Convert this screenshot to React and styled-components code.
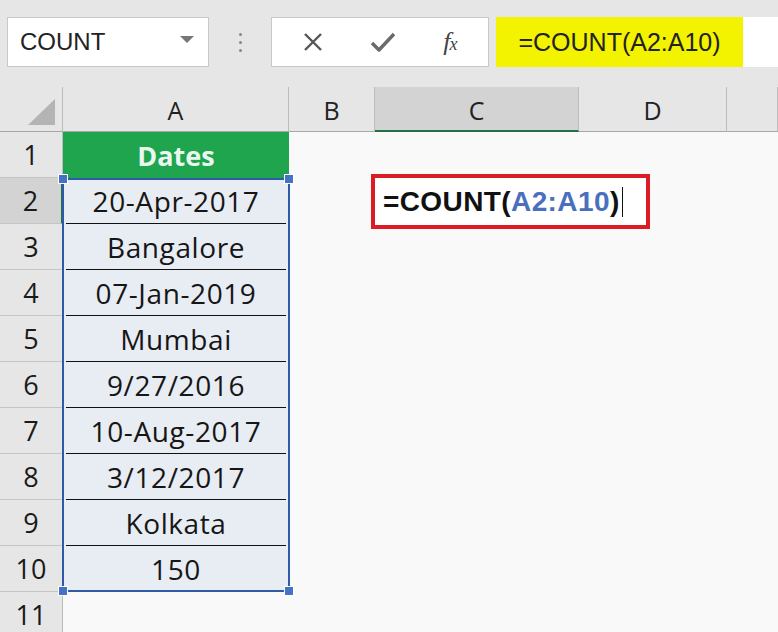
import styled, { createGlobalStyle } from "styled-components";

const GlobalStyle = createGlobalStyle`
    html, body {
        margin: 0;
        padding: 0;
        background: #f9f9f9;
        overflow: hidden;
    }
`;

const Page = styled.div`
    width: 778px;
    height: 632px;
    overflow: hidden;
    font-family: "Open Sans", "Liberation Sans", sans-serif;
    color: #1a1a1a;
`;

const TopBar = styled.div`
    height: 87px;
    background: #e6e6e6;
    display: flex;
    align-items: center;
    padding: 0 0 3px 7px;
    box-sizing: border-box;
`;

const NameBox = styled.div`
    width: 202px;
    height: 50px;
    box-sizing: border-box;
    background: #fff;
    border: 1px solid #c8c8c8;
    display: flex;
    align-items: center;
    justify-content: space-between;
    padding: 0 14px 0 12px;
    font-family: "Liberation Sans", Arial, sans-serif;
    font-size: 24px;
    color: #222;
`;

const Caret = styled.span`
    width: 0;
    height: 0;
    border-left: 7px solid transparent;
    border-right: 7px solid transparent;
    border-top: 7px solid #777;
    margin-top: -6px;
`;

const Dots = styled.div`
    width: 62px;
    display: flex;
    flex-direction: column;
    align-items: center;
    gap: 5px;
    span {
        width: 3px;
        height: 3px;
        border-radius: 50%;
        background: #888;
    }
`;

const FxButtons = styled.div`
    width: 218px;
    height: 50px;
    box-sizing: border-box;
    background: #fff;
    border: 1px solid #c8c8c8;
    display: flex;
    align-items: center;
    justify-content: space-around;
    padding: 0 8px;
    margin-right: 7px;
`;

const Fx = styled.span`
    font-family: "Liberation Serif", "Times New Roman", serif;
    font-style: italic;
    font-size: 26px;
    color: #444;
    letter-spacing: -1px;
    small {
        font-size: 18px;
    }
`;

const FormulaInput = styled.div`
    flex: 1;
    height: 50px;
    background: #fff;
    display: flex;
`;

const Highlight = styled.div`
    width: 247px;
    background: #f3f300;
    display: flex;
    align-items: center;
    justify-content: center;
    font-family: "Liberation Sans", Arial, sans-serif;
    font-size: 25px;
    color: #222;
`;

const Grid = styled.div`
    position: relative;
    display: grid;
    grid-template-columns: 63px 226px 86px 204px 148px 51px;
    grid-template-rows: 45px repeat(11, 46px);
`;

const Corner = styled.div`
    background: #e6e6e6;
    border-right: 1px solid #bcbcbc;
    border-bottom: 1px solid #a8a8a8;
    display: flex;
    align-items: flex-end;
    justify-content: flex-end;
    padding: 0 7px 6px 0;
    &::before {
        content: "";
        width: 0;
        height: 0;
        border-left: 27px solid transparent;
        border-bottom: 26px solid #b4b4b4;
    }
`;

const ColHead = styled.div`
    background: ${(p) => (p.$active ? "#d3d3d3" : "#e6e6e6")};
    border-right: 1px solid #bcbcbc;
    border-bottom: ${(p) => (p.$active ? "2px solid #217346" : "1px solid #a8a8a8")};
    display: flex;
    align-items: center;
    justify-content: center;
    font-size: 25px;
    color: #222;
    padding-top: 2px;
`;

const RowHead = styled.div`
    background: ${(p) => (p.$active ? "#d3d3d3" : "#e6e6e6")};
    border-right: ${(p) => (p.$active ? "2px solid #217346" : "1px solid #bcbcbc")};
    border-bottom: 1px solid #c4c4c4;
    display: flex;
    align-items: center;
    justify-content: center;
    font-size: 27px;
    color: #1a1a1a;
`;

const HeaderCell = styled.div`
    background: #1ea54e;
    color: #eaf7ee;
    font-weight: 700;
    font-size: 27px;
    display: flex;
    align-items: center;
    justify-content: center;
`;

const DataCell = styled.div`
    position: relative;
    background: #e8ecf3;
    display: flex;
    align-items: center;
    justify-content: center;
    font-size: 28px;
    letter-spacing: 0.6px;
    color: #161616;
    white-space: nowrap;
    &::after {
        content: "";
        display: ${(p) => (p.$last ? "none" : "block")};
        position: absolute;
        left: 3px;
        right: 3px;
        bottom: -1px;
        height: 2px;
        background: #111;
    }
`;

const Empty = styled.div`
    position: relative;
`;

const Selection = styled.div`
    position: absolute;
    grid-column: 2 / 3;
    grid-row: 3 / 12;
    top: 0;
    bottom: 0;
    left: -1px;
    right: -1px;
    border: 2px solid #2e5aa8;
    pointer-events: none;
`;

const Handle = styled.span`
    position: absolute;
    width: 8px;
    height: 8px;
    background: #4472c4;
    border: 1px solid #fff;
    ${(p) => (p.$top ? "top: -6px;" : "bottom: -6px;")}
    ${(p) => (p.$left ? "left: -6px;" : "right: -6px;")}
`;

const EditBox = styled.div`
    position: absolute;
    left: -4px;
    top: -4px;
    width: 279px;
    height: 55px;
    box-sizing: border-box;
    border: 4px solid #dc1c24;
    background: #fff;
    display: flex;
    align-items: center;
    padding-left: 8px;
    font-family: "Liberation Sans", Arial, sans-serif;
    font-weight: 700;
    font-size: 28px;
    letter-spacing: 0.4px;
    color: #111;
    white-space: nowrap;
    z-index: 2;
`;

const Ref = styled.span`
    color: #4a70bd;
`;

const Cursor = styled.span`
    display: inline-block;
    width: 1px;
    height: 30px;
    background: #111;
    margin-left: 2px;
`;

const cols = ["A", "B", "C", "D", ""];
const values = [
    "20-Apr-2017",
    "Bangalore",
    "07-Jan-2019",
    "Mumbai",
    "9/27/2016",
    "10-Aug-2017",
    "3/12/2017",
    "Kolkata",
    "150",
];

function CloseIcon() {
    return (
        <svg width="20" height="20" viewBox="0 0 20 20">
            <path d="M2 2 L18 18 M18 2 L2 18" stroke="#555" strokeWidth="2.4" fill="none" />
        </svg>
    );
}

function CheckIcon() {
    return (
        <svg width="26" height="22" viewBox="0 0 26 22">
            <path d="M2 12 L9 19 L24 3" stroke="#6a6a6a" strokeWidth="3.4" fill="none" strokeLinejoin="round" />
        </svg>
    );
}

export default function App() {
    const rows = [];
    for (let r = 1; r <= 11; r++) {
        rows.push(
            <RowHead key={"h" + r} $active={r === 2}>
                {r}
            </RowHead>
        );
        if (r === 1) {
            rows.push(<HeaderCell key={"a" + r}>Dates</HeaderCell>);
        } else if (r <= 10) {
            rows.push(
                <DataCell key={"a" + r} $last={r === 10}>
                    {values[r - 2]}
                </DataCell>
            );
        } else {
            rows.push(<Empty key={"a" + r} />);
        }
        for (let c = 2; c <= 5; c++) {
            rows.push(
                <Empty key={r + "-" + c}>
                    {r === 2 && c === 3 && (
                        <EditBox>
                            =COUNT(<Ref>A2:A10</Ref>)<Cursor />
                        </EditBox>
                    )}
                </Empty>
            );
        }
    }

    return (
        <Page>
            <GlobalStyle />
            <TopBar>
                <NameBox>
                    COUNT
                    <Caret />
                </NameBox>
                <Dots>
                    <span />
                    <span />
                    <span />
                </Dots>
                <FxButtons>
                    <CloseIcon />
                    <CheckIcon />
                    <Fx>
                        f<small>x</small>
                    </Fx>
                </FxButtons>
                <FormulaInput>
                    <Highlight>=COUNT(A2:A10)</Highlight>
                </FormulaInput>
            </TopBar>
            <Grid>
                <Corner />
                {cols.map((c, i) => (
                    <ColHead key={i} $active={c === "C"}>
                        {c}
                    </ColHead>
                ))}
                {rows}
                <Selection>
                    <Handle $top $left />
                    <Handle $top />
                    <Handle $left />
                    <Handle />
                </Selection>
            </Grid>
        </Page>
    );
}
